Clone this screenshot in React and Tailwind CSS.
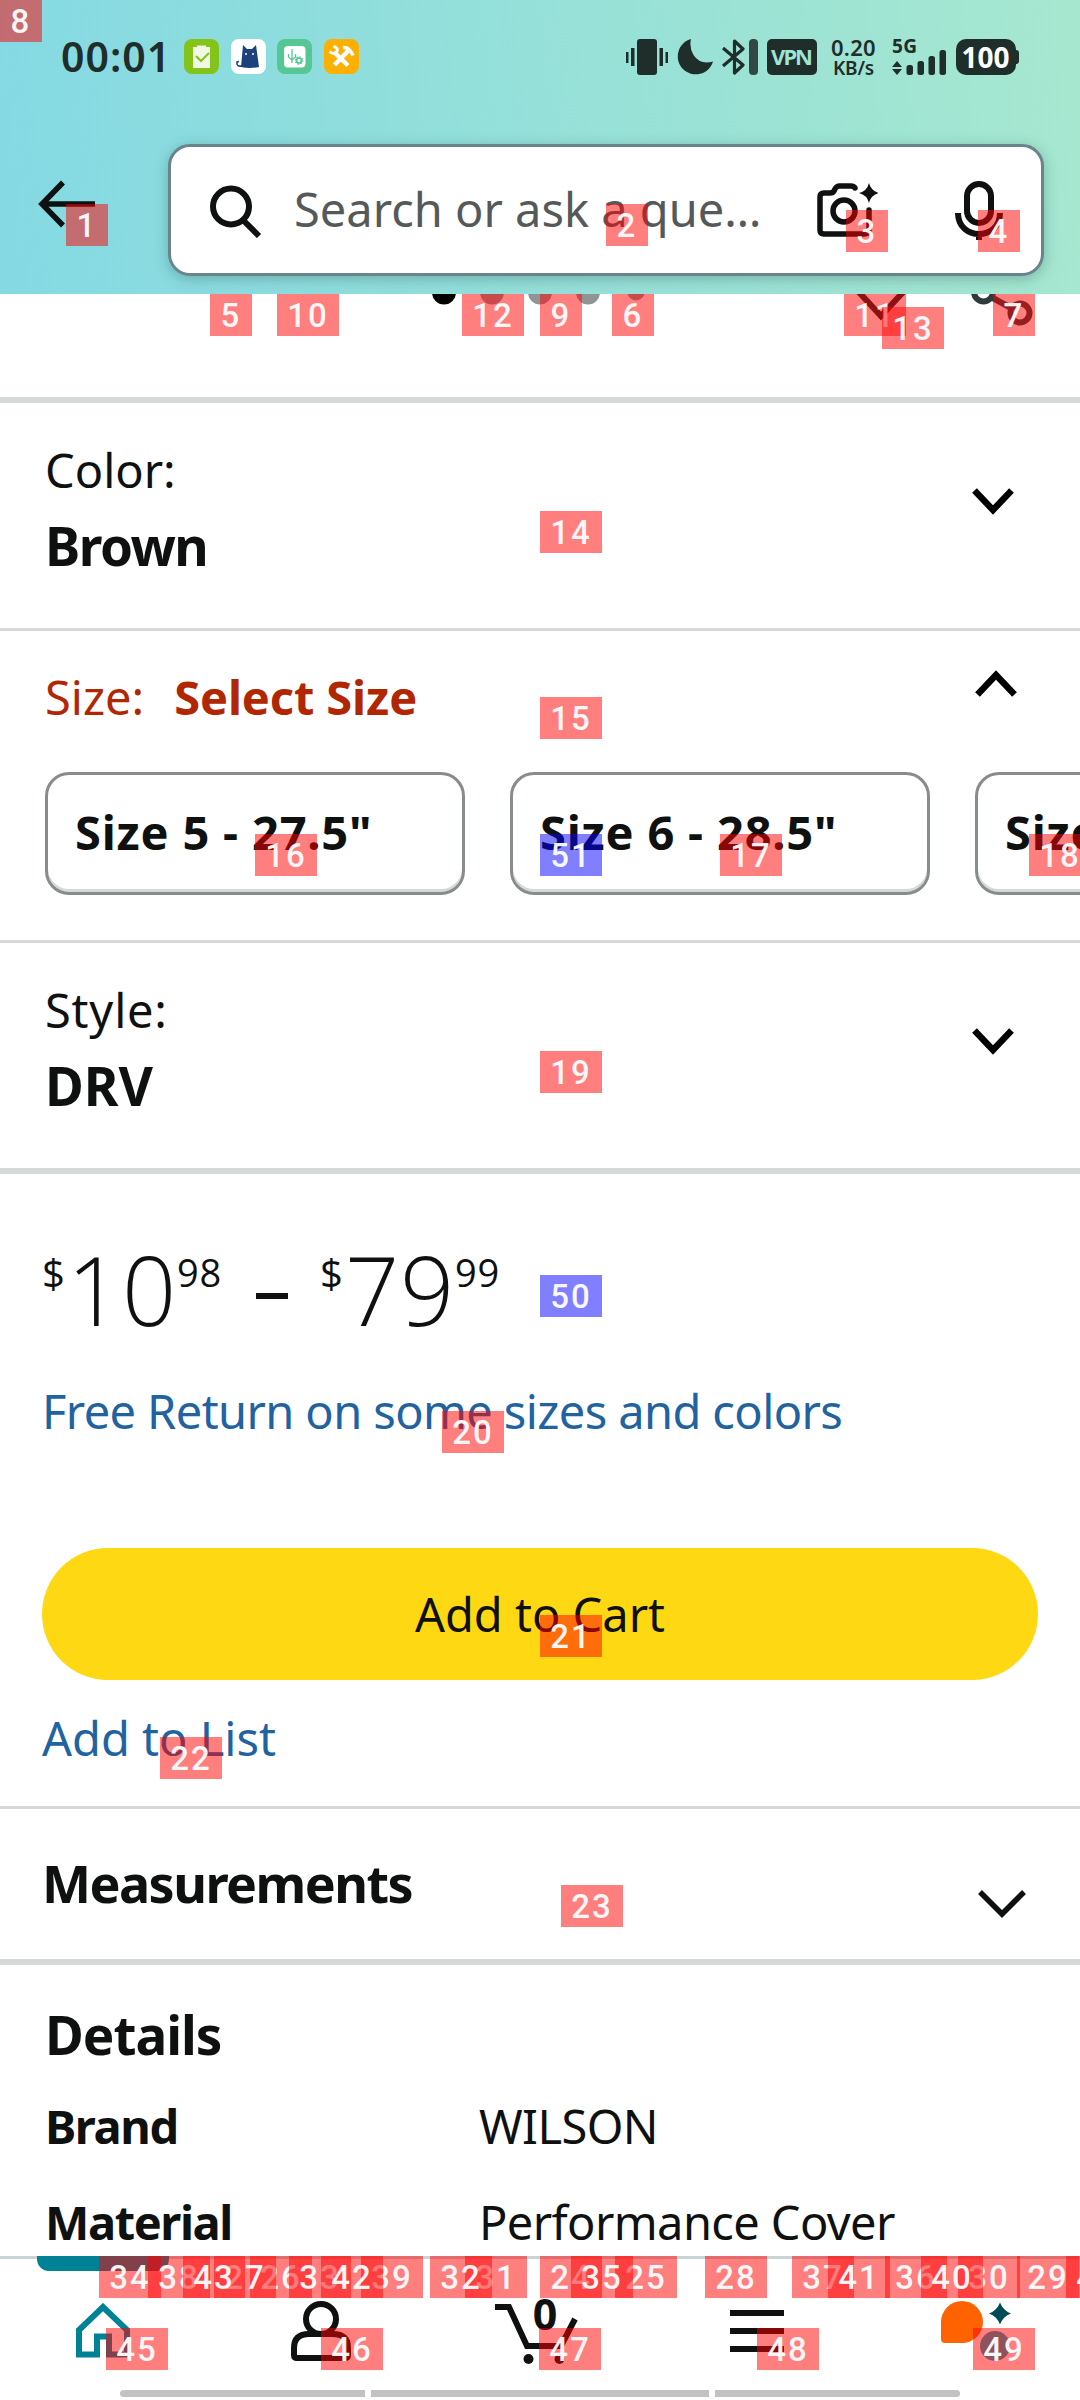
import React from "react";

function Badge({ n, x, y, blue }) {
  return (
    <div
      className={
        "absolute flex h-[42px] items-center justify-center font-['Roboto'] text-[33px] leading-none font-medium tracking-[2px] text-white/95 " +
        (n < 10 ? "w-[42px] " : "w-[62px] ") +
        (blue ? "bg-[#0000ff]/50" : "bg-[#ff0000]/50")
      }
      style={{ left: x, top: y }}
    >
      {n}
    </div>
  );
}

const BADGES = [
  [1, 66, 204], [2, 606, 204], [3, 846, 210], [4, 978, 210], [5, 210, 294], [6, 612, 294], [7, 993, 294],
  [8, 0, 0], [9, 540, 294], [10, 277, 294], [11, 844, 294], [12, 462, 294], [13, 882, 307], [14, 540, 511],
  [15, 540, 697], [16, 255, 834], [17, 720, 834], [18, 1029, 834], [19, 540, 1051], [20, 442, 1411],
  [21, 540, 1615], [22, 160, 1737], [23, 561, 1885], [24, 540, 2256], [25, 615, 2256], [26, 250, 2256],
  [27, 214, 2256], [28, 705, 2256], [29, 1017, 2256], [30, 958, 2256], [31, 465, 2256], [32, 430, 2256],
  [33, 289, 2256], [34, 99, 2256], [35, 571, 2256], [36, 885, 2256], [37, 792, 2256], [38, 148, 2256],
  [39, 361, 2256], [40, 921, 2256], [41, 828, 2256], [42, 321, 2256], [43, 183, 2256], [44, 1066, 2256],
  [45, 106, 2328], [46, 321, 2328], [47, 539, 2328], [48, 757, 2328], [49, 973, 2328],
  [50, 540, 1275, true], [51, 540, 834, true],
];

function Chevron({ up, className = "" }) {
  return (
    <svg viewBox="0 0 42 27" className={"h-[27px] w-[42px] shrink-0 " + className} fill="none" stroke="#000" strokeWidth="6.500">
      <path d={up ? "M2.500 24.500 21 5 39.500 24.500" : "M2.500 2.500 21 22 39.500 2.500"} />
    </svg>
  );
}

function StatusBar() {
  return (
    <div className="flex h-[114px] items-start pt-[39px] pl-[61px] text-[#1f2d2b]">
      <div className="w-[123px] text-[41px] leading-[34px] font-semibold tracking-[1px]">00:01</div>
      <div className="flex gap-[11.5px]">
        <svg viewBox="0 0 35 35" className="size-[35px]">
          <rect width="35" height="35" rx="8" fill="#84c31a" />
          <path d="M9 8h4V6.500h9V8h4v21H9z" fill="#f1f8e4" />
          <path d="m12 17 5 5 8-8" fill="none" stroke="#84c31a" strokeWidth="2" />
        </svg>
        <svg viewBox="0 0 35 35" className="size-[35px]">
          <rect width="35" height="35" rx="8" fill="#fff" />
          <path d="m12 6 4 4h5l4-4 3 22q-9 2-18 0z" fill="#1f417b" />
          <path d="M11 27q-6 1-5-4l2-.5" fill="none" stroke="#1f417b" strokeWidth="1.600" />
          <circle cx="15" cy="15" r="1" fill="#fff" /><circle cx="22" cy="15" r="1" fill="#fff" />
        </svg>
        <svg viewBox="0 0 35 35" className="size-[35px]">
          <rect width="35" height="35" rx="8" fill="#54c795" />
          <rect x="7" y="7" width="21.500" height="21.500" rx="4" fill="#fff" />
          <g fill="none" stroke="#54c795" strokeWidth="1.300">
            <path d="M15 10v14M11.500 15v3l3.500 3 3.500-3v-3" />
            <circle cx="22" cy="21.500" r="2.500" strokeWidth="1.700" />
            <circle cx="22" cy="21.500" r="3.600" strokeDasharray="1.400 1.400" />
          </g>
        </svg>
        <svg viewBox="0 0 35 35" className="size-[35px]">
          <rect width="35" height="35" rx="8" fill="#fbb003" />
          <g stroke="#fff" fill="none">
            <path d="m10 13 14 13.500M24 12 10.500 26" strokeWidth="4.500" />
            <path d="M9.500 7.500q5 1 3.500 5-3 4-7.500 0" strokeWidth="3" />
            <path d="M19 8.500q6-1 10 8" strokeWidth="3.500" />
          </g>
        </svg>
      </div>
      <svg viewBox="0 0 191 36" className="ml-[267px] h-[36px] w-[191px]" fill="#1f2d2b">
        <rect x="11" width="20" height="36" rx="3" />
        <path d="M0 13h2.500v11H0zM5 9h3.500v18H5zM33.500 9H37v18h-3.500zM39.500 13H42v11h-2.500z" />
        <path d="M65 0A18 18 0 1 0 87 22.500Q74 26 67.500 16 63 8 65 0Z" />
        <path d="m97 9 20 17-8.500 8V2l8.500 8-20 17" fill="none" stroke="#1f2d2b" strokeWidth="3.200" strokeLinejoin="round" />
        <rect x="123" width="9" height="36" rx="4" fillOpacity=".85" />
        <rect x="141" width="50" height="36" rx="5" />
        <text x="166" y="26" fill="#9de4d5" fontSize="22" fontWeight="700" textAnchor="middle" textLength="42">VPN</text>
      </svg>
      <div className="ml-[13px] w-[48px] text-center text-[22px] leading-[17px] font-semibold tracking-[0.3px] whitespace-nowrap">
        0.20<div className="pt-[4px] text-[19px] tracking-[-0.2px]">KB/s</div>
      </div>
      <svg viewBox="0 0 56 36" className="ml-[14px] h-[36px] w-[56px]" fill="#1f2d2b">
        <text x="0" y="14" fontSize="19" fontWeight="700" textLength="25">5G</text>
        <path d="m0 28 5-6 5 6zM0 30l5 6 5-6z" />
        <rect x="14.500" y="26" width="6.500" height="10" rx="2.500" /><rect x="25.500" y="22" width="6.500" height="14" rx="2.500" />
        <rect x="36.500" y="17" width="6.500" height="19" rx="2.500" /><rect x="47.500" y="11" width="6.500" height="25" rx="2.500" />
      </svg>
      <div className="ml-[8px] flex h-[36px] w-[60px] items-center justify-center rounded-[10px] bg-[#1f2d2b] text-[28px] leading-none font-bold text-white">100</div>
      <div className="mt-[11px] h-[14px] w-[3px] rounded-r-[3px] bg-[#1f2d2b]" />
    </div>
  );
}

function SearchHeader() {
  return (
    <div className="flex h-[180px] pl-[38px]">
      <svg viewBox="0 0 57 48" className="mt-[66px] h-[48px] w-[57px]" fill="none" stroke="#0f1111" strokeWidth="5.500">
        <path d="M25 2.500 4 24l21 21.500M4 24h53" />
      </svg>
      <div className="mt-[30px] ml-[73px] flex h-[132px] w-[876px] items-center rounded-[22px] border-[3px] border-[#67858b] bg-white shadow-[0_3px_14px_rgba(50,90,90,0.35)]">
        <svg viewBox="0 0 54 54" className="mt-[2px] ml-[38px] size-[54px]" fill="none" stroke="#0f1111" strokeWidth="6">
          <circle cx="22" cy="22.500" r="18" /><path d="m34 36 16 16" />
        </svg>
        <div className="mt-[-3px] ml-[31px] w-[480px] text-[47px] leading-[64px] tracking-[0px] whitespace-nowrap text-[#565959]">Search or ask a que…</div>
        <svg viewBox="0 0 61 54" className="ml-[43px] h-[54px] w-[61px]" fill="none" stroke="#0f1111" strokeWidth="5.500" strokeLinecap="round">
          <path d="M38 5q-1-2-4-2H22q-3 0-5 5-1 2-4 2H7Q3 10 3 14v33q0 4 4 4h40q5 0 5-4V27" />
          <circle cx="27" cy="28" r="11" />
          <path d="M52 0q2 8 10 10-8 2-10 10-2-8-10-10 8-2 10-10Z" fill="#0f1111" stroke="none" />
        </svg>
        <svg viewBox="0 0 48 60" className="ml-[77px] h-[60px] w-[48px]" fill="none" stroke="#0f1111" strokeWidth="6">
          <rect x="12" y="4" width="24" height="39" rx="12" />
          <path d="M3 33c0 28 42 28 42 0M24 53v7" />
        </svg>
      </div>
    </div>
  );
}

function CarouselStrip() {
  return (
    <div className="h-[109px] overflow-hidden border-b-[6px] border-[#d5d9d9]">
      <svg viewBox="0 0 1080 103" className="h-[103px] w-full">
        <circle cx="444" cy="-1.500" r="12" />
        <g fill="#919496">
          <circle cx="492" cy="-1.500" r="12" /><circle cx="540" cy="-1.500" r="12" /><circle cx="588" cy="-1.500" r="12" />
          <circle cx="636" cy="-2" r="8.500" />
        </g>
        <g fill="none" stroke="#2e3a3e" strokeWidth="6">
          <path d="m856-5 25 27 25-27" stroke="#1d2526" />
          <circle cx="983.500" cy="-2" r="9.500" /><circle cx="1020" cy="19" r="9.500" /><path d="m991 3 20 11" />
        </g>
      </svg>
    </div>
  );
}

function VariationRow({ label, value, className, valueClass }) {
  return (
    <section className={"flex justify-between border-[#d5d9d9] pt-[35px] pr-[66px] pl-[45px] " + className}>
      <div>
        <div className="text-[47px] leading-[64px]">{label}</div>
        <div className={"mt-[12px] text-[53px] leading-[64px] font-bold " + valueClass}>{value}</div>
      </div>
      <Chevron className="mt-[50px]" />
    </section>
  );
}

function Price({ whole, cents }) {
  return (
    <div className="flex font-['Open_Sans']">
      <span className="mt-[14px] w-[25px] text-[40px] leading-[40px]">$</span>
      <span className="text-[95px] leading-[100px] font-light tracking-[0.8px]">{whole}</span>
      <span className="mt-[13px] text-[38px] leading-[40px] tracking-[0.6px]">{cents}</span>
    </div>
  );
}

function DetailRow({ name, value, className }) {
  return (
    <div className={"flex text-[47px] leading-[64px] " + className}>
      <div className="w-[434px] font-bold tracking-[-1.4px]">{name}</div>
      <div className="tracking-[-0.6px]">{value}</div>
    </div>
  );
}

function BottomNav() {
  return (
    <nav className="relative h-[144px] border-t-[3px] border-[#c9d4d6] bg-white">
      <div className="absolute top-[-3px] left-[37px] h-[15px] w-[132px] rounded-b-[12px] bg-[#008296]" />
      <div className="flex h-[131px] pt-[42px] pl-[76px]">
        <svg viewBox="0 0 54 57" className="mt-[2px] h-[57px] w-[54px]" fill="none" stroke="#008296" strokeWidth="6">
          <path d="M3 51.500V27L27 4l24 23v24.500H33V33.500H21v18Z" />
        </svg>
        <svg viewBox="0 0 60 60" className="ml-[161px] size-[60px]" fill="none" stroke="#0f1111" strokeWidth="6">
          <circle cx="30" cy="18" r="15" />
          <path d="M18 33h24q15 0 15 14v7q0 3-3 3H6q-3 0-3-3v-7q0-14 15-14Z" />
        </svg>
        <svg viewBox="0 0 83 66" className="mt-[-3px] ml-[144px] h-[66px] w-[83px]" fill="none" stroke="#0f1111" strokeWidth="6">
          <path d="M0 9h14l18 39h34l14-27" />
          <circle cx="33.500" cy="61" r="5" fill="#0f1111" stroke="none" /><circle cx="64.500" cy="61" r="5" fill="#0f1111" stroke="none" />
          <text x="50" y="32" fill="#0f1111" stroke="none" fontSize="43" fontWeight="700" textAnchor="middle">0</text>
        </svg>
        <div className="mt-[9px] ml-[152px] flex w-[54px] flex-col gap-[12px]">
          <div className="h-[6px] bg-[#0f1111]" /><div className="h-[6px] bg-[#0f1111]" /><div className="h-[6px] bg-[#0f1111]" />
        </div>
        <svg viewBox="0 0 70 60" className="ml-[157px] h-[60px] w-[70px]">
          <path d="M0 21a21 21 0 1 1 21 21H4q-4 0-4-4Z" fill="#ff6200" />
          <path d="M59 1.500q3 8 11 11-8 3-11 11-3-8-11-11 8-3 11-11Z" fill="#044b59" />
          <circle cx="54" cy="45" r="15" fill="#1fa5b9" />
        </svg>
      </div>
      <div className="flex gap-[6px] pl-[120px]">
        <div className="h-[7px] w-[245px] rounded-l-full bg-[#c2c2c2]" />
        <div className="h-[7px] w-[338px] bg-[#c2c2c2]" />
        <div className="h-[7px] w-[245px] rounded-r-full bg-[#c2c2c2]" />
      </div>
    </nav>
  );
}

export default function App() {
  return (
    <div className="relative h-[2400px] w-[1080px] overflow-hidden bg-white font-['Noto_Sans',sans-serif] text-[#0f1111]">
      <header className="h-[294px] bg-[linear-gradient(84deg,#84d9e3_0%,#a6e7cf_100%)]">
        <StatusBar />
        <SearchHeader />
      </header>
      <CarouselStrip />
      <VariationRow label="Color:" value="Brown" className="h-[228px] border-b-[3px]" valueClass="tracking-[-1.5px]" />
      <section className="h-[312px] border-b-[3px] border-[#d5d9d9] pt-[34px] pl-[45px]">
        <div className="flex justify-between pr-[63px] text-[47px] leading-[64px] text-[#b12704]">
          <div>Size:<span className="ml-[30px] font-bold tracking-[-0.1px]">Select Size</span></div>
          <Chevron up className="mt-[5px]" />
        </div>
        <div className="mt-[43px] flex gap-[45px]">
          {['Size 5 - 27.5"', 'Size 6 - 28.5"', 'Size 7 - 29.5"'].map((s) => (
            <div key={s} className="h-[123px] w-[420px] shrink-0 rounded-[24px] border-[3px] border-[#888c8c] pt-[25px] pl-[27px] text-[47px] leading-[64px] font-bold tracking-[0.8px] whitespace-nowrap shadow-[inset_0_-3px_0_#d5d9d9]">{s}</div>
          ))}
        </div>
      </section>
      <VariationRow label="Style:" value="DRV" className="h-[231px] border-b-[6px] tracking-[0.8px]" valueClass="tracking-[0px]" />
      <section className="h-[635px] border-b-[3px] border-[#d5d9d9] px-[42px] pt-[65px]">
        <div className="flex h-[100px]">
          <div className="w-[214px]"><Price whole="10" cents="98" /></div>
          <div className="mt-[54px] h-[6px] w-[32px] bg-[#0f1111]" />
          <div className="ml-[32px]"><Price whole="79" cents="99" /></div>
        </div>
        <div className="mt-[40px] text-[47px] leading-[64px] tracking-[-0.6px] text-[#2162a1]">Free Return on some sizes and colors</div>
        <button className="mt-[105px] flex h-[132px] w-full items-center justify-center rounded-full bg-[#ffd814] text-[47px] leading-[64px]">Add to Cart</button>
        <div className="mt-[26px] text-[47px] leading-[64px] text-[#2162a1]">Add to List</div>
      </section>
      <section className="flex h-[156px] justify-between border-b-[6px] border-[#d5d9d9] pt-[42px] pr-[54px] pl-[42px]">
        <div className="text-[52px] leading-[64px] font-bold tracking-[-1.55px]">Measurements</div>
        <svg viewBox="0 0 48 28" className="mt-[39px] h-[28px] w-[48px]" fill="none" stroke="#0f1111" strokeWidth="5.500">
          <path d="M2 2 24 24 46 2" />
        </svg>
      </section>
      <section className="h-[291px] pt-[38px] pl-[45px]">
        <div className="text-[53px] leading-[64px] font-bold tracking-[-1px]">Details</div>
        <DetailRow name="Brand" value="WILSON" className="mt-[27px]" />
        <DetailRow name="Material" value="Performance Cover" className="mt-[32px]" />
      </section>
      <BottomNav />
      {BADGES.map(([n, x, y, blue]) => (
        <Badge key={n} n={n} x={x} y={y} blue={blue} />
      ))}
    </div>
  );
}
